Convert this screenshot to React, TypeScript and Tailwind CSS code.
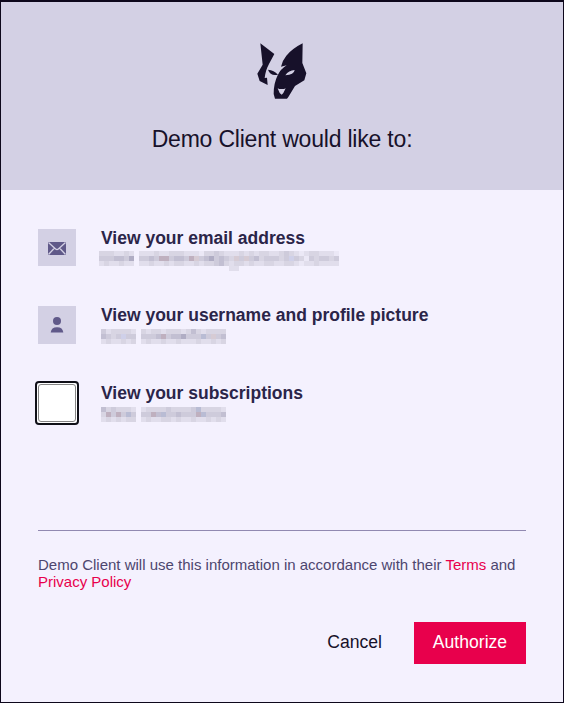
import type { ReactNode } from 'react';

const shades: Record<string, string> = {
  '.': 'bg-[#f4f1fe]',
  a: 'bg-[#ebe8f6]',
  b: 'bg-[#e1deec]',
  c: 'bg-[#d8d5e3]',
  d: 'bg-[#cecbdb]',
  e: 'bg-[#c2bfd2]',
  f: 'bg-[#b0adc4]',
  p: 'bg-[#d6cbd4]',
  q: 'bg-[#bfb0bf]',
  u: 'bg-[#cfd0e9]',
  v: 'bg-[#b9bcd4]',
};

function Redacted({ rows, className = '' }: { rows: string[]; className?: string }) {
  return (
    <div className={className} aria-hidden="true">
      {rows.map((row, y) => (
        <div key={y} className="flex h-[5px]">
          {row.split('').map((cell, x) => (
            <span key={x} className={`size-[5px] ${shades[cell]}`} />
          ))}
        </div>
      ))}
    </div>
  );
}

function Tile({ children }: { children: ReactNode }) {
  return <div className="flex size-[38px] shrink-0 items-center justify-center bg-[#d3d0e4]">{children}</div>;
}

function Logo() {
  return (
    <svg className="h-[56px] w-[50px]" viewBox="47 37 150 168" fill="#17112a" fillRule="evenodd">
      <path d="M57 38 99 70 83 100C76 113 72 126 70 142L77 141 79 163 55 151 48 129 64 102Z" />
      <path d="M80 117Q98 119 110 132 88 138 80 117Z" />
      <path d="M184 38 183 97 195 128 189 149 161 166 141 199 137 204H101L97 190Q97 158 109 134 118 115 136 104L119 108Q124 88 135 75 154 53 184 38ZM132 134Q142 119 160 118 158 133 132 134ZM109 173 114 175 128 175 133 173 126 187 121 192 115 187Z" />
    </svg>
  );
}

export default function App() {
  return (
    <main className="flex h-[703px] w-[564px] flex-col border border-t-2 border-[#0d071b] bg-[#f4f1fe] font-['Liberation_Sans',Arial,sans-serif] text-[#2b2549]">
      <header className="flex h-[188px] shrink-0 flex-col items-center bg-[#d3d0e4] pt-[41px] text-[#17112a]">
        <Logo />
        <h1 className="mt-[24px] text-[23px] leading-[32px] tracking-[-0.2px]">Demo Client would like to:</h1>
      </header>

      <section className="flex h-[340px] shrink-0 flex-col px-[37px] pt-[39px]">
        <div className="flex h-[77px]">
          <div className="h-[37px] overflow-hidden">
            <Tile>
              <svg width="18" height="13" viewBox="0 0 18 13">
                <path fill="#605989" d="M0 0H18V13H0Z" />
                <path fill="none" stroke="#d3d0e4" strokeWidth="1.3" d="M.5.5 7.6 7Q9 8 10.4 7L17.5.5M.5 12.5 6.5 6M17.5 12.5 11.5 6" />
              </svg>
            </Tile>
          </div>
          <div className="ml-[25px]">
            <h2 className="h-[22px] text-[17.5px] leading-[18px] font-bold">View your email address</h2>
            <Redacted
              className="-ml-[2px]"
              rows={[
                'cccbbcb.bbbcbbcccbbbaccdcbbbcbcbccbbcdcbabccbbba',
                'dddeedf.ddedqqdeedqpdefdedcpdpdecdddcdudcadcddcd',
                'bcbbcbb.bbcbbcbccbbcbccdecbccbcbbccbbccbabbcbbbb',
                '..........................bb....................',
              ]}
            />
          </div>
        </div>
        <div className="flex h-[78px]">
          <Tile>
            <svg width="14" height="16" viewBox="0 0 14 16" fill="#605989">
              <circle cx="7" cy="4" r="4" />
              <path d="M.7 15.5Q1.3 10.3 7 10.2T13.3 15.5Z" />
            </svg>
          </Tile>
          <div className="ml-[25px]">
            <h2 className="h-[23px] text-[17.5px] leading-[18px] font-bold">View your username and profile picture</h2>
            <Redacted
              rows={['dbccccb.cbccbcccbcecbcccc', 'edcdudd.dddeqdeefdddvdpde', 'bcbbcbc.bcbbcbbcbbbcbbcbc']}
            />
          </div>
        </div>
        <div className="flex">
          <div className="-mt-[3px] -ml-[3px] size-[44px] shrink-0 rounded-[4px] border-2 border-[#101018] bg-white p-px">
            <div className="size-full rounded-[3px] border border-[#858585] bg-white" />
          </div>
          <div className="ml-[22px]">
            <h2 className="h-[23px] text-[17.5px] leading-[18px] font-bold">View your subscriptions</h2>
            <Redacted
              rows={['ecdcccb.bccccdccccdvccccb', 'cqdqdvd.ddqevddedddqvddde', 'bcbcbcc.bcbbccbcbbcbbcbcb']}
            />
          </div>
        </div>
      </section>

      <footer className="mx-[37px] border-t border-[#9189b1]">
        <p className="mt-[25px] text-[15px] leading-[17px] text-[#4d466f]">
          Demo Client will use this information in accordance with their{' '}
          <a className="text-[#e8004c]">Terms</a> and <a className="block text-[#e8004c]">Privacy Policy</a>
        </p>
        <div className="mt-[32px] flex justify-end">
          <button className="mr-[32px] h-[40px] text-[17.6px] text-[#17112a]">Cancel</button>
          <button className="h-[42px] w-[112px] bg-[#e8004c] pb-[2px] text-[17.6px] text-white">Authorize</button>
        </div>
      </footer>
    </main>
  );
}
